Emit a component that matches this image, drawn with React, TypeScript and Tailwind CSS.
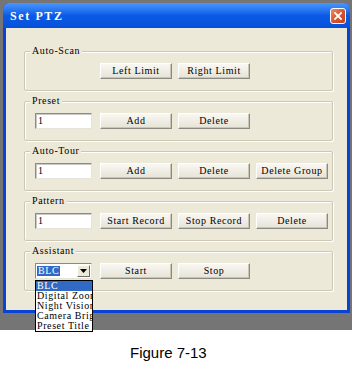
import React from 'react';

const ui = "font-['Liberation_Serif',serif] text-[10px] leading-[10px] tracking-[0.6px] text-black";

function Btn({ label }: { label: string }) {
  return (
    <div className="w-[72px] h-[16px] flex items-center justify-center bg-gradient-to-b from-[#f8f7f2] to-[#e6e3d6] border border-t-white border-l-white border-r-[#8c8a80] border-b-[#8c8a80] shadow-[inset_-1px_-1px_0_#c9c6b8]">
      <span className={ui}>{label}</span>
    </div>
  );
}

function Field({ value }: { value: string }) {
  return (
    <div className="w-[57px] h-[16px] mr-[2px] bg-white border border-t-[#8a8a8a] border-l-[#8a8a8a] border-r-[#e6e4da] border-b-[#e6e4da] shadow-[inset_1px_1px_0_#c8c8c8] flex items-center pl-[2px]">
      <span className={ui}>{value}</span>
    </div>
  );
}

function Group({ title, children }: { title: string; children: React.ReactNode }) {
  return (
    <div className="relative h-[40px] border border-[#cbc8b8] rounded-[2px] shadow-[1px_1px_0_#ffffff,inset_1px_1px_0_#ffffff] pt-[11px] pl-[10px]">
      <span className={`absolute -top-[6px] left-[5px] px-[2px] bg-[#ece9d8] ${ui}`}>{title}</span>
      <div className="flex items-center gap-[6px]">{children}</div>
    </div>
  );
}

export default function App() {
  const options = ['BLC', 'Digital Zoom', 'Night Vision', 'Camera Brightness', 'Preset Title'];
  return (
    <div className="w-[352px] h-[366px] bg-white relative overflow-hidden">
      <div className="h-[330px] bg-[#757575] pt-[3px] pl-[3px] pr-[2px]">
        <div className="w-[347px] h-[310px] bg-[#0843d2] rounded-t-[6px] px-[3px] pb-[3px] flex flex-col">
          <div className="h-[25px] -mx-[3px] px-[7px] rounded-t-[6px] bg-gradient-to-b from-[#4a97ff] via-[#0b5ae6] to-[#0650d8] flex items-center justify-between">
            <span className="font-['Liberation_Serif',serif] font-bold text-[12px] tracking-[1.6px] text-white">Set PTZ</span>
            <div className="w-[16px] h-[16px] rounded-[3px] border border-white bg-gradient-to-br from-[#f08a6a] via-[#d9542f] to-[#c0401d] flex items-center justify-center mr-[-3px]">
              <svg width="10" height="10" viewBox="0 0 10 10">
                <path d="M2 2 L8 8 M8 2 L2 8" stroke="white" strokeWidth="1.8" strokeLinecap="square" />
              </svg>
            </div>
          </div>
          <div className="flex-1 bg-[#ece9d8] pt-[23px] pl-[18px] pr-[14px] flex flex-col gap-[10px]">
            <Group title="Auto-Scan">
              <div className="w-[59px]" />
              <Btn label="Left Limit" />
              <Btn label="Right Limit" />
            </Group>
            <Group title="Preset">
              <Field value="1" />
              <Btn label="Add" />
              <Btn label="Delete" />
            </Group>
            <Group title="Auto-Tour">
              <Field value="1" />
              <Btn label="Add" />
              <Btn label="Delete" />
              <Btn label="Delete Group" />
            </Group>
            <Group title="Pattern">
              <Field value="1" />
              <Btn label="Start Record" />
              <Btn label="Stop Record" />
              <Btn label="Delete" />
            </Group>
            <Group title="Assistant">
              <div className="relative w-[57px] h-[16px] mr-[2px] bg-white border border-t-[#8a8a8a] border-l-[#8a8a8a] border-r-[#e6e4da] border-b-[#e6e4da] flex items-center pl-[1px]">
                <span className={`bg-[#316ac5] px-[1px] ${ui} !text-white`}>BLC</span>
                <div className="ml-auto mr-[1px] w-[13px] h-[12px] bg-[#ece9d8] border border-t-white border-l-white border-r-[#6f6d66] border-b-[#6f6d66] flex items-center justify-center">
                  <svg width="7" height="4" viewBox="0 0 7 4">
                    <path d="M0 0 H7 L3.5 4 Z" fill="black" />
                  </svg>
                </div>
                <div className="absolute top-[16px] -left-[1px] w-[58px] bg-white border border-black z-10">
                  {options.map((o, i) => (
                    <div
                      key={o}
                      className={`h-[10px] pl-[1px] overflow-hidden whitespace-nowrap ${ui} ${i === 0 ? 'bg-[#316ac5] !text-white' : ''}`}
                    >
                      {o}
                    </div>
                  ))}
                </div>
              </div>
              <Btn label="Start" />
              <Btn label="Stop" />
            </Group>
          </div>
        </div>
      </div>
      <div className="pt-[15px] pl-[130px] font-['Liberation_Sans',Arial,sans-serif] text-[15px] leading-[15px] text-black">
        Figure 7-13
      </div>
    </div>
  );
}
